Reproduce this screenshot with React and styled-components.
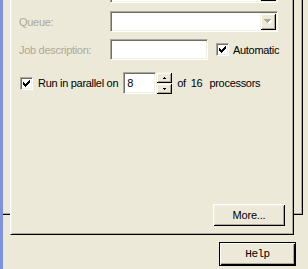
import React from 'react';
import styled, { createGlobalStyle, css } from 'styled-components';

const C = {
  face: '#ece9d8',
  light: '#f1efe2',
  hi: '#ffffff',
  shadow: '#aca899',
  dark: '#000000',
  stripe: '#7d93df',
};

const Global = createGlobalStyle`
  html, body { margin: 0; padding: 0; background: ${C.face}; overflow: hidden; }
  body { font-family: "Liberation Sans", Arial, sans-serif; font-size: 11px; color: #000; }
  #root { width: 308px; height: 269px; }
`;

const sunken = css`
  box-sizing: border-box;
  border-top: 1px solid ${C.shadow};
  border-left: 1px solid ${C.shadow};
  border-bottom: 1px solid ${C.hi};
  border-right: 1px solid ${C.hi};
  box-shadow: inset 1px 1px 0 #716f64, inset -1px -1px 0 ${C.light};
  background: #fff;
`;

const raised = css`
  box-sizing: border-box;
  background: ${C.face};
  box-shadow: inset 1px 1px 0 ${C.light}, inset -1px -1px 0 ${C.dark},
    inset 2px 2px 0 ${C.hi}, inset -2px -2px 0 ${C.shadow};
`;

const Window = styled.div`
  display: flex;
  width: 308px;
  height: 269px;
  overflow: hidden;
  background: ${C.face};
`;

const Edge = styled.div`
  width: 3px;
  flex: none;
  background: ${C.stripe};
`;

const Main = styled.div`
  flex: 1;
  display: flex;
  flex-direction: column;
  min-width: 0;
`;

const Frame = styled.div`
  flex: none;
  width: 300px;
  height: 215px;
  box-sizing: border-box;
  border-right: 1px solid ${C.dark};
  border-bottom: 1px solid ${C.dark};
  box-shadow: inset -1px -1px 0 ${C.shadow};
`;

const Page = styled.div`
  margin-left: 7px;
  width: 284px;
  height: 235px;
  box-sizing: border-box;
  background: ${C.face};
  border-left: 1px solid ${C.hi};
  border-right: 1px solid ${C.dark};
  border-bottom: 1px solid ${C.dark};
  box-shadow: inset 1px 0 0 ${C.light}, inset -1px -1px 0 ${C.shadow};
  padding: 0 8px 8px 8px;
  display: flex;
  flex-direction: column;
`;

const Row = styled.div`
  flex: none;
  display: flex;
  align-items: center;
  height: ${(p) => p.$h || 21}px;
  margin-top: ${(p) => p.$mt || 0}px;
`;

const Label = styled.span`
  flex: none;
  width: 91px;
  white-space: nowrap;
  letter-spacing: -0.3px;
  color: ${(p) => (p.$disabled ? C.shadow : '#000')};
`;

const Text = styled.span`
  flex: none;
  white-space: nowrap;
  letter-spacing: -0.3px;
  margin-left: ${(p) => p.$ml || 0}px;
`;

const Combo = styled.div`
  ${sunken};
  width: 168px;
  height: 21px;
  padding: 1px;
  display: flex;
  justify-content: flex-end;
`;

const DropBtn = styled.div`
  ${raised};
  width: 16px;
  height: 17px;
  display: flex;
  align-items: center;
  justify-content: center;
`;

const Field = styled.div`
  ${sunken};
  flex: none;
  width: ${(p) => p.$w}px;
  height: ${(p) => p.$h || 21}px;
  margin-left: ${(p) => p.$ml || 0}px;
  padding-left: 3px;
  display: flex;
  align-items: center;
`;

const Box = styled.div`
  ${sunken};
  flex: none;
  width: 13px;
  height: 13px;
  margin-left: ${(p) => p.$ml || 0}px;
  margin-right: ${(p) => p.$mr || 0}px;
  display: flex;
  align-items: center;
  justify-content: center;
`;

const Spinner = styled.div`
  flex: none;
  width: 16px;
  height: 22px;
  display: flex;
  flex-direction: column;
`;

const SpinBtn = styled.div`
  ${raised};
  flex: 1;
  display: flex;
  align-items: center;
  justify-content: center;
`;

const PushButton = styled.div`
  ${raised};
  box-shadow: inset 1px 1px 0 ${C.hi}, inset -1px -1px 0 ${C.dark},
    inset 2px 2px 0 ${C.light}, inset -2px -2px 0 ${C.shadow};
  width: 72px;
  height: 22px;
  display: flex;
  align-items: center;
  justify-content: center;
  letter-spacing: -0.2px;
`;

const MoreButton = styled(PushButton)`
  margin-top: auto;
  align-self: flex-end;
`;

const Footer = styled.div`
  flex: none;
  display: flex;
  justify-content: flex-end;
  margin-top: 27px;
  padding-right: 12px;
`;

const HelpButton = styled.div`
  box-sizing: border-box;
  width: 77px;
  height: 24px;
  background: ${C.face};
  border: 1px solid ${C.dark};
  box-shadow: inset 1px 1px 0 ${C.hi}, inset -1px -1px 0 ${C.dark},
    inset -2px -2px 0 ${C.shadow};
  display: flex;
  align-items: center;
  justify-content: center;
  font-family: "Liberation Mono", "Courier New", monospace;
  font-size: 11px;
  letter-spacing: -0.5px;
`;

const Check = () => (
  <svg width="7" height="7" viewBox="0 0 7 7" shapeRendering="crispEdges">
    {[2, 3, 4, 3, 2, 1, 0].map((y, x) => (
      <rect key={x} x={x} y={y} width="1" height="3" fill="#000" />
    ))}
  </svg>
);

const DisabledArrow = () => (
  <svg width="8" height="5" viewBox="0 0 8 5" shapeRendering="crispEdges">
    <rect x="2" y="1" width="7" height="1" fill="#fff" />
    <rect x="3" y="2" width="5" height="1" fill="#fff" />
    <rect x="4" y="3" width="3" height="1" fill="#fff" />
    <rect x="5" y="4" width="1" height="1" fill="#fff" />
    <rect x="0" y="0" width="7" height="1" fill={C.shadow} />
    <rect x="1" y="1" width="5" height="1" fill={C.shadow} />
    <rect x="2" y="2" width="3" height="1" fill={C.shadow} />
    <rect x="3" y="3" width="1" height="1" fill={C.shadow} />
  </svg>
);

const SpinArrow = ({ down }) => (
  <svg width="3" height="2" viewBox="0 0 3 2" shapeRendering="crispEdges">
    <rect x="1" y={down ? 1 : 0} width="1" height="1" fill="#000" />
    <rect x="0" y={down ? 0 : 1} width="3" height="1" fill="#000" />
  </svg>
);

export default function App() {
  return (
    <>
      <Global />
      <Window>
        <Edge />
        <Main>
          <Frame>
            <Page>
              <Row $mt={-18}>
                <Label />
                <Combo>
                  <DropBtn>
                    <DisabledArrow />
                  </DropBtn>
                </Combo>
              </Row>
              <Row $mt={8}>
                <Label $disabled>Queue:</Label>
                <Combo>
                  <DropBtn>
                    <DisabledArrow />
                  </DropBtn>
                </Combo>
              </Row>
              <Row $mt={7}>
                <Label $disabled>Job description:</Label>
                <Field $w={98} />
                <Box $ml={8} $mr={4}>
                  <Check />
                </Box>
                <Text>Automatic</Text>
              </Row>
              <Row $mt={12} $h={22}>
                <Box $ml={1} $mr={5}>
                  <Check />
                </Box>
                <Text>Run in parallel on</Text>
                <Field $w={33} $h={22} $ml={5}>8</Field>
                <Spinner>
                  <SpinBtn>
                    <SpinArrow />
                  </SpinBtn>
                  <SpinBtn>
                    <SpinArrow down />
                  </SpinBtn>
                </Spinner>
                <Text $ml={5}>of</Text>
                <Text $ml={5}>16</Text>
                <Text $ml={7}>processors</Text>
              </Row>
              <MoreButton>More...</MoreButton>
            </Page>
          </Frame>
          <Footer>
            <HelpButton>Help</HelpButton>
          </Footer>
        </Main>
      </Window>
    </>
  );
}
